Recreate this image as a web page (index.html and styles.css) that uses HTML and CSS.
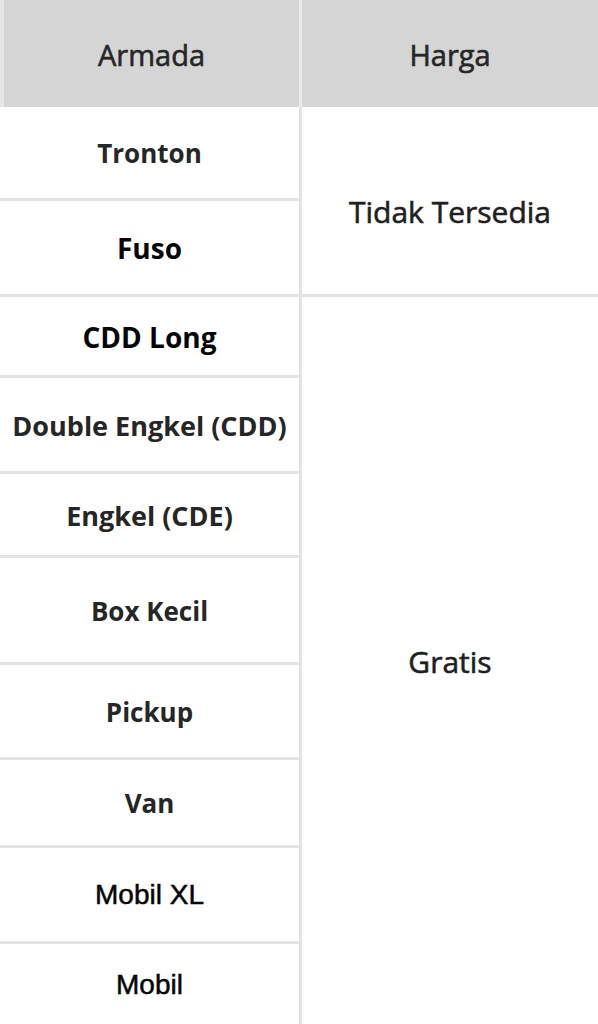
FILE: index.html
```html
<!DOCTYPE html>
<html lang="id">
<head>
<meta charset="utf-8">
<title>Armada</title>
<link rel="stylesheet" href="styles.css">
</head>
<body>
<div class="table">
  <div class="cell head left">Armada</div>
  <div class="cell head right">Harga</div>

  <div class="cell name">Tronton</div>
  <div class="cell price span-na">Tidak Tersedia</div>
  <div class="cell name black">Fuso</div>

  <div class="cell name black">CDD Long</div>
  <div class="cell price span-free">Gratis</div>
  <div class="cell name wide">Double Engkel (CDD)</div>
  <div class="cell name wide">Engkel (CDE)</div>
  <div class="cell name">Box Kecil</div>
  <div class="cell name">Pickup</div>
  <div class="cell name">Van</div>
  <div class="cell name alt">Mobil XL</div>
  <div class="cell name alt last">Mobil</div>
</div>
</body>
</html>
```
FILE: styles.css
```css
html, body {
  margin: 0;
  padding: 0;
  background: #ffffff;
}

.table {
  width: 598px;
  height: 1024px;
  display: grid;
  grid-template-columns: 299px 1fr;
  grid-template-rows: 107px 94px 96px 81px 96px 84px 107px 95px 88px 96px 1fr;
  font-family: "Open Sans", "Liberation Sans", sans-serif;
  color: #262626;
  overflow: hidden;
}

.cell {
  box-sizing: border-box;
  display: flex;
  align-items: center;
  justify-content: center;
  text-align: center;
  white-space: nowrap;
}

.head {
  background: #d5d5d5;
  font-size: 29px;
  font-weight: 400;
  color: #262626;
  -webkit-text-stroke: 0.6px #262626;
  padding-top: 2px;
}

.head.left {
  border-left: 4px solid #e6e6e6;
}

.head.right {
  border-left: 3px solid #ececec;
}

.name {
  grid-column: 1;
  font-size: 26px;
  font-weight: 700;
  border-bottom: 3px solid #e4e4e4;
  padding-top: 1px;
}

.name.wide {
  font-size: 27px;
}

.name.black {
  color: #050505;
  font-size: 28px;
}

.name.alt {
  color: #050505;
  font-family: "Liberation Sans", "Open Sans", sans-serif;
  font-weight: 400;
  font-size: 28px;
  -webkit-text-stroke: 0.5px #050505;
}

.name.last {
  border-bottom: none;
}

.price {
  grid-column: 2;
  font-size: 30px;
  font-weight: 400;
  color: #1f1f1f;
  -webkit-text-stroke: 0.6px #1f1f1f;
  border-left: 3px solid #e2e2e2;
}

.span-na {
  grid-row: 2 / span 2;
  border-bottom: 3px solid #e4e4e4;
  padding-top: 22px;
}

.span-free {
  grid-row: 4 / span 8;
  padding-top: 2px;
}
```
